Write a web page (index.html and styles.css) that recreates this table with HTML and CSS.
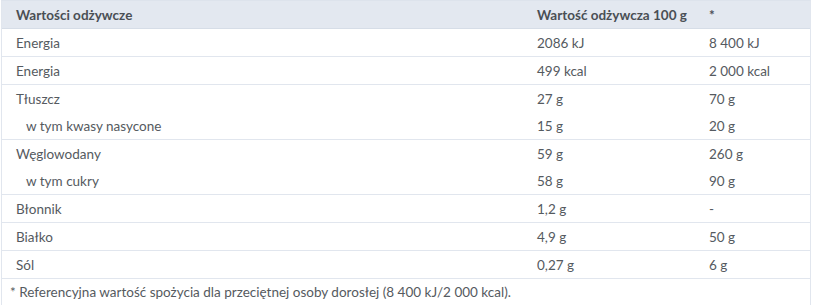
FILE: index.html
```html
<!DOCTYPE html>
<html lang="pl">
<head>
<meta charset="utf-8">
<link rel="stylesheet" href="styles.css">
</head>
<body>
<div class="nutri">
  <div class="row head">
    <div class="c name">Wartości odżywcze</div>
    <div class="c v1">Wartość odżywcza 100 g</div>
    <div class="c v2">*</div>
  </div>
  <div class="group">
    <div class="row"><div class="c name">Energia</div><div class="c v1">2086 kJ</div><div class="c v2">8 400 kJ</div></div>
  </div>
  <div class="group">
    <div class="row"><div class="c name">Energia</div><div class="c v1">499 kcal</div><div class="c v2">2 000 kcal</div></div>
  </div>
  <div class="group">
    <div class="row"><div class="c name">Tłuszcz</div><div class="c v1">27 g</div><div class="c v2">70 g</div></div>
    <div class="row"><div class="c name sub">w tym kwasy nasycone</div><div class="c v1">15 g</div><div class="c v2">20 g</div></div>
  </div>
  <div class="group">
    <div class="row"><div class="c name">Węglowodany</div><div class="c v1">59 g</div><div class="c v2">260 g</div></div>
    <div class="row"><div class="c name sub">w tym cukry</div><div class="c v1">58 g</div><div class="c v2">90 g</div></div>
  </div>
  <div class="group">
    <div class="row"><div class="c name">Błonnik</div><div class="c v1">1,2 g</div><div class="c v2">-</div></div>
  </div>
  <div class="group">
    <div class="row"><div class="c name">Białko</div><div class="c v1">4,9 g</div><div class="c v2">50 g</div></div>
  </div>
  <div class="group">
    <div class="row"><div class="c name">Sól</div><div class="c v1">0,27 g</div><div class="c v2">6 g</div></div>
  </div>
  <div class="foot">* Referencyjna wartość spożycia dla przeciętnej osoby dorosłej (8 400 kJ/2 000 kcal).</div>
</div>
</body>
</html>
```
FILE: styles.css
```css
html, body {
  margin: 0;
  padding: 0;
  background: #fff;
}
body {
  font-family: Lato, "Liberation Sans", sans-serif;
  font-size: 13.5px;
  color: #555a60;
}
.nutri {
  width: 808px;
  margin-left: 1px;
  border-left: 1px solid #e1e6ee;
  border-right: 1px solid #e1e6ee;
  border-top: 1px solid #dde3ec;
}
.row {
  display: grid;
  grid-template-columns: 521px 172px 1fr;
  height: 27px;
  align-items: center;
}
.head {
  background: #e3e8f0;
  color: #4a4f55;
  font-weight: 700;
  height: 27px;
  border-bottom: 1px solid #d6dde7;
}
.group {
  border-bottom: 1px solid #e1e6ee;
}
.c {
  padding-left: 14px;
  white-space: nowrap;
}
.sub {
  padding-left: 24px;
}
.foot {
  height: 26px;
  display: flex;
  align-items: center;
  padding-left: 8px;
}
```
